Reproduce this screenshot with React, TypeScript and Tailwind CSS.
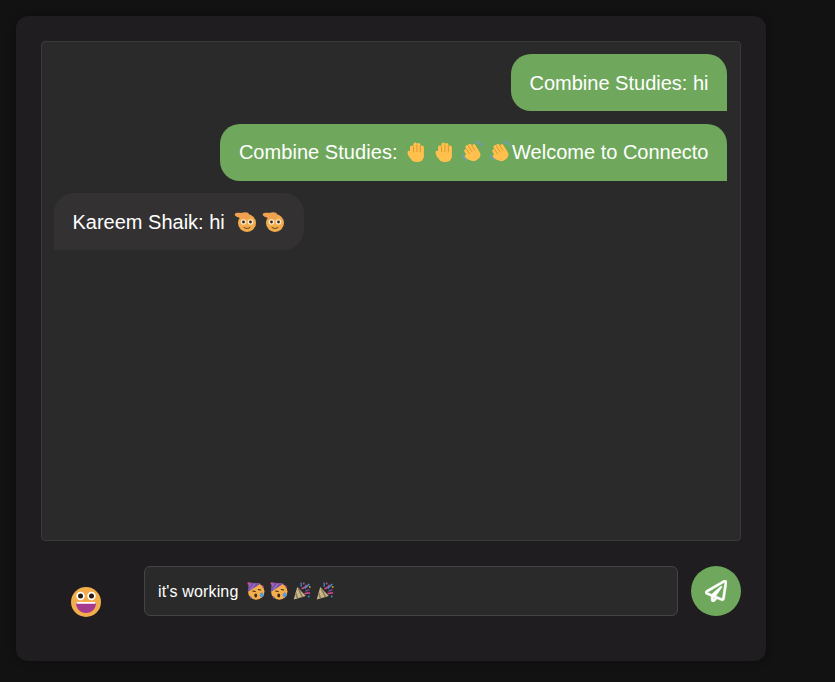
import { FaRegPaperPlane } from "react-icons/fa";

// emoji are drawn by hand, no emoji font in the sandbox
const HandShape = () => (
  <>
    <ellipse cx="3" cy="12.500" rx="1.900" ry="4" fill="#FFC04D" transform="rotate(-22 3 12.500)" />
    <rect x="3" y="3.500" width="3.700" height="11" rx="1.850" fill="#FFC04D" />
    <rect x="6.400" y="0.500" width="3.700" height="12" rx="1.850" fill="#FFC04D" />
    <rect x="9.800" y="1" width="3.700" height="12" rx="1.850" fill="#FFC04D" />
    <rect x="13.200" y="3.500" width="3.700" height="11" rx="1.850" fill="#FFC04D" />
    <rect x="3" y="8.500" width="13.900" height="11.500" rx="6" fill="#FFC04D" />
    <path stroke="#D0912E" strokeWidth="0.800" strokeLinecap="round" d="M6.500 5v5M9.950 3v6.500M13.350 4v6" />
  </>
);

const Hand = ({ className = "" }: { className?: string }) => (
  <svg viewBox="0 0 18 20" className={`inline-block w-[18px] h-[20px] mx-[2.250px] align-[-3px] ${className}`}>
    <HandShape />
  </svg>
);

const Wave = ({ className = "" }: { className?: string }) => (
  <svg viewBox="0 0 21 21" className={`inline-block w-[21px] h-[21px] mx-[0.750px] align-[-3px] ${className}`}>
    <g transform="rotate(-32 10 12) translate(1.500 2) scale(0.920)">
      <HandShape />
    </g>
    <path
      fill="none"
      stroke="#6F9DB8"
      strokeWidth="1.600"
      strokeLinecap="round"
      d="M13.500 1c2.500-.3 5 1 6.500 3.500M.8 14.500c.3 1.800 1.400 3.200 3 4"
    />
  </svg>
);

const Cowboy = ({ className = "" }: { className?: string }) => (
  <svg viewBox="0 0 22 20" className={`inline-block w-[22px] h-[20px] align-[-3px] ${className}`}>
    <circle cx="13" cy="11" r="9" fill="#F2AC4C" />
    <ellipse cx="8.500" cy="3.800" rx="8" ry="2.800" fill="#F0A050" transform="rotate(10 8.500 3.800)" />
    <ellipse cx="11" cy="2.600" rx="4" ry="2.400" fill="#F0A050" />
    <circle cx="9.500" cy="10" r="2.800" fill="#FBE8CC" />
    <circle cx="16.500" cy="10" r="2.800" fill="#FBE8CC" />
    <circle cx="9.500" cy="10" r="1.400" fill="#3B2A1A" />
    <circle cx="16.500" cy="10" r="1.400" fill="#3B2A1A" />
    <path fill="none" stroke="#6B4216" strokeWidth="1" strokeLinecap="round" d="M10 15.500c2 1.300 4.500 1.300 6 0" />
  </svg>
);

const Party = ({ className = "" }: { className?: string }) => (
  <svg viewBox="0 0 36 36" className={`inline-block w-[18.500px] h-[18px] align-[-3px] ${className}`}>
    <circle cx="18" cy="19" r="16.500" fill="#F4AE4B" />
    <path fill="#7B4FA8" d="M1 20L3 1l24 2z" />
    <path fill="#9A74C4" d="M5 14L14 3l3 .3L6 17zM3 7l4-5 2.500.2L3 11z" />
    <circle cx="3" cy="3" r="2.500" fill="#D64A8C" />
    <circle cx="31" cy="9" r="1.800" fill="#D64A8C" />
    <circle cx="7" cy="31" r="1.800" fill="#7B4FA8" />
    <path fill="none" stroke="#3B2A1A" strokeWidth="2.200" strokeLinecap="round" d="M11 18l5 1M22 15l5 1" />
    <ellipse cx="17" cy="27" rx="2.800" ry="3.800" fill="#3B2A1A" />
    <path fill="#5B9BD5" d="M29 20c3.500 3 5 6.500 3 9s-6 2-7-1 1-5.500 4-8z" />
  </svg>
);

const Popper = ({ className = "" }: { className?: string }) => (
  <svg viewBox="0 0 36 36" className={`inline-block w-[18.500px] h-[18px] align-[-3px] ${className}`}>
    <path fill="#C9B68A" d="M1 35l7-25 17 18z" />
    <path fill="#8A7A5A" d="M4 24l3 9 3-1-4.500-13zM9 14l8 17 3-1-9-19z" />
    <path fill="#D64A8C" d="M16 12c4-1 8-3 9-7l2.500.8C26 11 21 14 17 15zM22 22c4-2 9-2 12-1l-.5 2.800c-3-.7-7 0-10.500 1z" />
    <path fill="#3F8FD0" d="M14 9c1.200-2 1-5 0-7.500L16.500 1c1.200 3 1 6.500-.3 9zM22 12l9-9 2.200 2.200-9 9z" />
    <path fill="#7B4FA8" d="M24 17l8-3 .8 2.300-8 3z" />
    <circle cx="21" cy="3" r="1.800" fill="#D64A8C" />
    <circle cx="33" cy="10" r="1.800" fill="#E0A030" />
    <circle cx="31" cy="29" r="1.800" fill="#3F8FD0" />
  </svg>
);

const Grin = () => (
  <svg viewBox="0 0 30 30" className="w-[30px] h-[30px]">
    <circle cx="15" cy="15" r="15" fill="#F2AE4C" />
    <circle cx="9.500" cy="9" r="4.200" fill="#fff" />
    <circle cx="20.500" cy="9" r="4.200" fill="#fff" />
    <circle cx="9.500" cy="9" r="2.500" fill="#2B1B12" />
    <circle cx="20.500" cy="9" r="2.500" fill="#2B1B12" />
    <path fill="#A63A8F" d="M5 15.500h20c0 6-4 10.500-10 10.500S5 21.500 5 15.500z" />
    <path fill="#fff" d="M5.500 15h19c0 .6 0 1.200-.1 1.800H5.600c-.1-.6-.1-1.200-.1-1.800z" />
  </svg>
);

export default function App() {
  return (
    <div className="min-h-[682px] bg-[#121212] p-4 font-['Liberation_Sans',Arial,sans-serif]">
      <div className="w-[750px] h-[645px] rounded-xl bg-[#1f1d1f] p-[25px] shadow-[0_0_10px_rgba(0,0,0,0.3)]">
        <div className="h-[500px] flex flex-col gap-[12.5px] items-start pt-3 pl-3 pr-[13px] bg-[#2b2a2b] border border-[#3a3a3a] rounded">
          <div className="self-end h-[57px] flex items-center px-[18.5px] rounded-[20px] rounded-br-none bg-[#6fa85c] text-white text-[20px] whitespace-pre">
            Combine Studies: hi
          </div>
          <div className="self-end h-[57px] flex items-center px-[18.5px] rounded-[20px] rounded-br-none bg-[#6fa85c] text-white text-[20px]">
            <span className="whitespace-pre">
              <span className="tracking-[0.05px]">Combine Studies: </span>
              <Hand className="ml-[3.500px]" /> <Hand /> <Wave className="ml-[1.750px]" /> <Wave />
              Welcome to Connecto
            </span>
          </div>
          <div className="h-[57px] flex items-center px-[18.5px] rounded-[20px] rounded-bl-none bg-[#333132] text-white text-[20px]">
            <span className="whitespace-pre">
              Kareem Shaik: hi <Cowboy className="ml-[3.400px]" /> <Cowboy className="ml-[0.500px] mr-[2px]" />
            </span>
          </div>
        </div>
        <div className="mt-[25px] flex items-start">
          <div className="w-[103px] h-[50px] flex pl-[30px] pt-[21px]">
            <Grin />
          </div>
          <div className="w-[534px] h-[50px] flex items-center px-[13px] pt-px bg-[#2b2a2b] border border-[#444444] rounded-md text-white text-[16px]">
            <span className="whitespace-pre">
              <span className="tracking-[0.15px]">it's working </span>
              <Party className="ml-[3.500px]" /> <Party className="ml-[0.500px]" /> <Popper /> <Popper />
            </span>
          </div>
          <button className="ml-[13px] w-[50px] h-[50px] rounded-full bg-[#6fa85c] text-white flex items-center justify-center">
            <FaRegPaperPlane size={22} stroke="currentColor" strokeWidth={14} />
          </button>
        </div>
      </div>
    </div>
  );
}
